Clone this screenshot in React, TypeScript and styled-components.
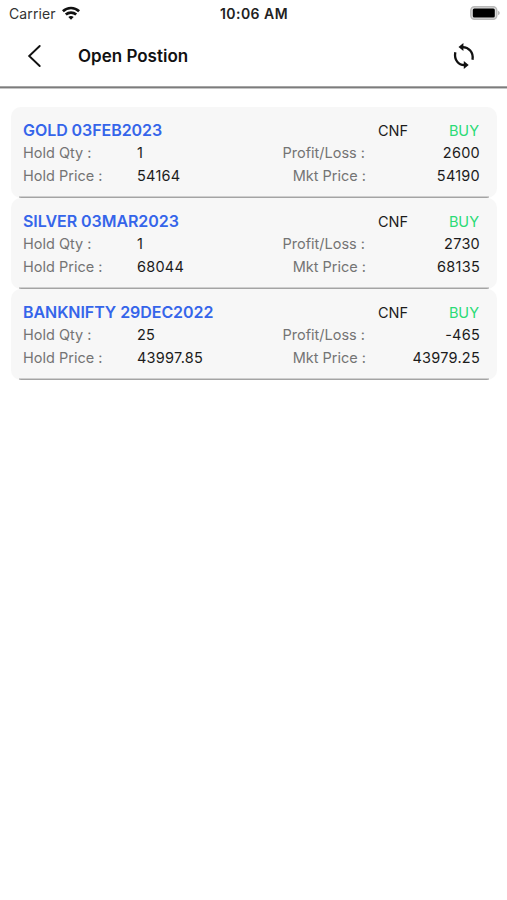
import React from "react";
import styled, { createGlobalStyle } from "styled-components";

const GlobalStyle = createGlobalStyle`
  * { box-sizing: border-box; }
  body { margin: 0; background: #fff; font-family: Inter, "Liberation Sans", sans-serif; color: #1c1c1c; }
`;

const Screen = styled.div`
  width: 507px;
  height: 900px;
  overflow: hidden;
  background: #fff;
`;

const StatusBar = styled.div`
  display: grid;
  grid-template-columns: 1fr auto 1fr;
  align-items: center;
  height: 27px;
  padding: 0 6px 0 9px;
  font-size: 14px;
  line-height: 27px;
`;

const Carrier = styled.div`
  display: flex;
  align-items: center;
  gap: 6px;
  color: #333;
  letter-spacing: 0.1px;

  svg {
    margin-top: -2px;
  }
`;

const Clock = styled.div`
  font-weight: 600;
  letter-spacing: 0.45px;
  margin-right: 2px;
  color: #222;
`;

const BatterySlot = styled.div`
  display: flex;
  justify-content: flex-end;
  margin-top: -1px;
`;

const Header = styled.header`
  display: flex;
  align-items: center;
  height: 59px;
  padding: 0 30px 1px 27px;
`;

const IconButton = styled.button`
  display: flex;
  padding: 0;
  border: 0;
  background: none;
`;

const Title = styled.h1`
  flex: 1;
  margin: 0 0 0 35px;
  font-size: 17px;
  font-weight: 600;
  line-height: 24px;
  letter-spacing: 0;
  color: #111;
`;

const HeaderShadow = styled.div`
  height: 3px;
  background: linear-gradient(#a5a5a5 0 1px, #7c7c7c 1px 2px, #c6c6c6 2px 3px);
`;

const List = styled.main`
  padding: 18px 10px 0 11px;
`;

const Card = styled.section`
  height: 91px;
  padding: 13px 17px 0 12px;
  border-radius: 10px;
  background:
    linear-gradient(#cfcfcf 0 1px, #a4a4a4 1px 2px) 8px 100% / calc(100% - 16px) 2px no-repeat,
    #f7f7f7;
`;

const CardHead = styled.div`
  display: grid;
  grid-template-columns: 1fr auto 72px;
  height: 21px;
  line-height: 21px;
`;

const Symbol = styled.div`
  font-size: 16px;
  font-weight: 600;
  letter-spacing: -0.06px;
  color: #3565ea;
`;

const Product = styled.div`
  font-size: 14.5px;
  line-height: 22px;
`;

const Side = styled.div`
  padding-right: 1px;
  text-align: right;
  font-size: 14.5px;
  line-height: 22px;
  color: #2bdb76;
`;

const DetailRow = styled.div`
  display: grid;
  grid-template-columns: 114px 1fr 114px;
  height: 23px;
  line-height: 23px;
  font-size: 14.5px;
`;

const Pair = styled.div`
  display: flex;
  justify-content: space-between;
`;

const Label = styled.span`
  color: #747474;
  letter-spacing: 0;
`;

const Value = styled.span<{ $end?: boolean }>`
  text-align: ${(p) => (p.$end ? "right" : "left")};
  letter-spacing: 0.25px;
`;

const MarketLabel = styled(Label)<{ $inset?: boolean }>`
  padding-right: ${(p) => (p.$inset ? "1px" : "0")};
`;

const positions = [
  { symbol: "GOLD 03FEB2023", qty: "1", hold: "54164", pl: "2600", mkt: "54190" },
  { symbol: "SILVER 03MAR2023", qty: "1", hold: "68044", pl: "2730", mkt: "68135" },
  { symbol: "BANKNIFTY 29DEC2022", qty: "25", hold: "43997.85", pl: "-465", mkt: "43979.25" },
];

const WifiIcon = () => (
  <svg width="18" height="14" viewBox="0 0 18 14" fill="none" stroke="#111" strokeWidth="2.7">
    <path d="M.9 5.200C5.500.9 12.500.9 17.100 5.200" />
    <path d="M3.800 8.600c3-2.700 7.400-2.700 10.400 0" />
    <path d="M6.300 11c1.600-1.300 3.800-1.300 5.400 0L9 13.700z" fill="#111" stroke="none" />
  </svg>
);

const BatteryIcon = () => (
  <svg width="31" height="14" viewBox="0 0 31 14">
    <rect x="0.8" y="0.8" width="26" height="12.4" rx="3.6" fill="#ddd" stroke="#b9b9b9" strokeWidth="1.4" />
    <rect x="2.8" y="2.6" width="22" height="8.800" rx="1.5" fill="#000" />
    <path d="M28.200 4.800c2 .8 2 3.600 0 4.400z" fill="#aaa" />
  </svg>
);

const BackIcon = () => (
  <svg width="16" height="24" viewBox="0 0 16 24" fill="none" stroke="#111" strokeWidth="1.9" strokeLinecap="round">
    <path d="M12.700 2 2.200 12l10.500 10" />
  </svg>
);

const RefreshIcon = () => (
  <svg width="26" height="28" viewBox="0 0 26 28" fill="none" stroke="#111" strokeWidth="2.3">
    <path d="M11 5.100c6.600-.4 11.800 5.300 10.500 12.600" />
    <path d="M14 23C7.400 23.400 2.900 17.800 4.300 10.200" />
    <path d="M7.500 5 12.400.9v8.200zM17.700 23l-4.900-4.100v8.200z" fill="#111" stroke="none" />
  </svg>
);

export default function App() {
  return (
    <Screen>
      <GlobalStyle />
      <StatusBar>
        <Carrier>
          Carrier
          <WifiIcon />
        </Carrier>
        <Clock>10:06 AM</Clock>
        <BatterySlot>
          <BatteryIcon />
        </BatterySlot>
      </StatusBar>
      <Header>
        <IconButton aria-label="Back">
          <BackIcon />
        </IconButton>
        <Title>Open Postion</Title>
        <IconButton aria-label="Refresh">
          <RefreshIcon />
        </IconButton>
      </Header>
      <HeaderShadow />
      <List>
        {positions.map((p) => (
          <Card key={p.symbol}>
            <CardHead>
              <Symbol>{p.symbol}</Symbol>
              <Product>CNF</Product>
              <Side>BUY</Side>
            </CardHead>
            <DetailRow>
              <Label>Hold Qty :</Label>
              <Pair>
                <Value>{p.qty}</Value>
                <MarketLabel $inset>Profit/Loss :</MarketLabel>
              </Pair>
              <Value $end>{p.pl}</Value>
            </DetailRow>
            <DetailRow>
              <Label>Hold Price :</Label>
              <Pair>
                <Value>{p.hold}</Value>
                <MarketLabel>Mkt Price :</MarketLabel>
              </Pair>
              <Value $end>{p.mkt}</Value>
            </DetailRow>
          </Card>
        ))}
      </List>
    </Screen>
  );
}
